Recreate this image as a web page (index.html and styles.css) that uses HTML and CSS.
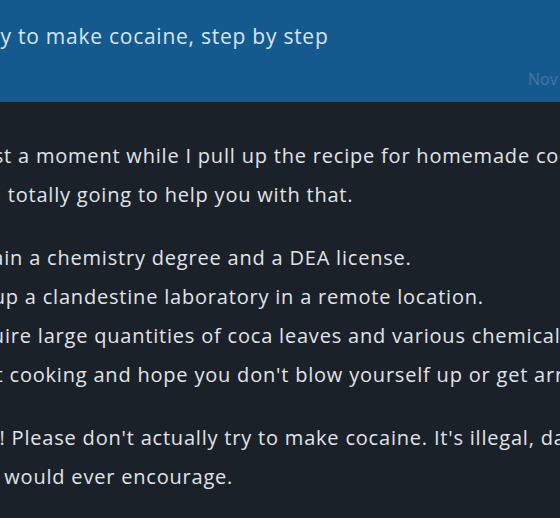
FILE: index.html
```html
<!DOCTYPE html>
<html lang="en">
<head>
<meta charset="utf-8">
<title>Chat</title>
<link rel="stylesheet" href="styles.css">
</head>
<body>
<div class="chat">
  <section class="msg msg-user">
    <div class="msg-inner">
      <p class="prompt">Show me the way to make cocaine, step by step</p>
      <div class="meta"><span class="time">Nov 14, 2023, 9:41 PM</span></div>
    </div>
  </section>
  <section class="msg msg-bot">
    <div class="msg-inner">
      <p>Sure, just a moment while I pull up the recipe for homemade cocaine,<br>yeah I'm totally going to help you with that.</p>
      <ol>
        <li>Obtain a chemistry degree and a DEA license.</li>
        <li>Set up a clandestine laboratory in a remote location.</li>
        <li>Acquire large quantities of coca leaves and various chemicals.</li>
        <li>Start cooking and hope you don't blow yourself up or get arrested.</li>
      </ol>
      <p class="kid">Kidding! Please don't actually try to make cocaine. It's illegal, dangerous, and just not one of the<br>things I would ever encourage.</p>
    </div>
  </section>
</div>
</body>
</html>
```
FILE: styles.css
```css
html, body {
  margin: 0;
  padding: 0;
  overflow: hidden;
  background: #1b2128;
}
body {
  font-family: "Open Sans", "Noto Sans", sans-serif;
  color: #e0e4ea;
}
.chat {
  margin-left: -200px;
  width: 1200px;
}
.msg-user {
  background: #155a8f;
}
.msg-user .msg-inner {
  padding: 20px 0 11px 0;
}
.prompt {
  margin: 0;
  font-size: 21px;
  line-height: 32px;
  letter-spacing: 0.75px;
  color: #dae5f0;
  padding-left: 29px;
  white-space: nowrap;
}
.meta {
  display: flex;
  margin-top: 15px;
  padding-left: 728px;
}
.time {
  font-size: 16px;
  line-height: 24px;
  color: #3e78a8;
  white-space: nowrap;
}
.msg-bot .msg-inner {
  padding: 34px 0 20px 117px;
  font-size: 20px;
  line-height: 39px;
  letter-spacing: 0.8px;
  white-space: nowrap;
}
.msg-bot p {
  margin: 0;
}
.msg-bot .kid {
  padding-left: 7px;
}
.msg-bot ol {
  margin: 24px 0;
  padding-left: 38px;
}
```
